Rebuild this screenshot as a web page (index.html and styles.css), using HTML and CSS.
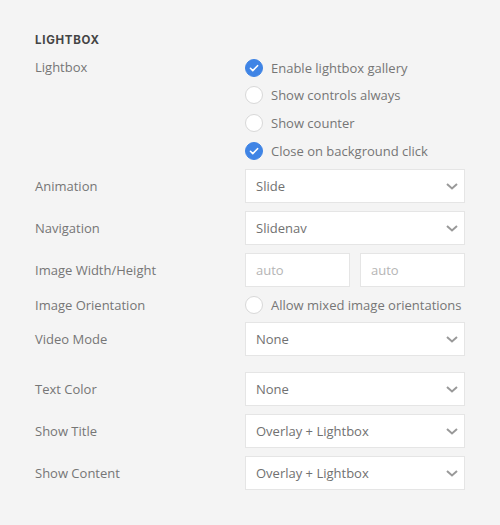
FILE: index.html
```html
<!DOCTYPE html>
<html>
<head>
<meta charset="utf-8">
<link rel="stylesheet" href="styles.css">
</head>
<body>
<div class="panel">
  <h3 class="heading">LIGHTBOX</h3>

  <div class="row row-top">
    <div class="label">Lightbox</div>
    <div class="control checks">
      <div class="check"><span class="box on"><svg viewBox="0 0 18 18"><path d="M5 9.3l2.6 2.6L13 6.4" /></svg></span>Enable lightbox gallery</div>
      <div class="check"><span class="box"></span>Show controls always</div>
      <div class="check"><span class="box"></span>Show counter</div>
      <div class="check"><span class="box on"><svg viewBox="0 0 18 18"><path d="M5 9.3l2.6 2.6L13 6.4" /></svg></span>Close on background click</div>
    </div>
  </div>

  <div class="row first-select">
    <div class="label">Animation</div>
    <div class="control"><div class="select">Slide<svg class="chev" viewBox="0 0 12 7"><path d="M1 1l5 4.5L11 1"/></svg></div></div>
  </div>

  <div class="row">
    <div class="label">Navigation</div>
    <div class="control"><div class="select">Slidenav<svg class="chev" viewBox="0 0 12 7"><path d="M1 1l5 4.5L11 1"/></svg></div></div>
  </div>

  <div class="row">
    <div class="label">Image Width/Height</div>
    <div class="control pair">
      <div class="input">auto</div>
      <div class="input">auto</div>
    </div>
  </div>

  <div class="row check-row">
    <div class="label">Image Orientation</div>
    <div class="control"><div class="check"><span class="box"></span>Allow mixed image orientations</div></div>
  </div>

  <div class="row">
    <div class="label">Video Mode</div>
    <div class="control"><div class="select">None<svg class="chev" viewBox="0 0 12 7"><path d="M1 1l5 4.5L11 1"/></svg></div></div>
  </div>

  <div class="row spaced">
    <div class="label">Text Color</div>
    <div class="control"><div class="select">None<svg class="chev" viewBox="0 0 12 7"><path d="M1 1l5 4.5L11 1"/></svg></div></div>
  </div>

  <div class="row">
    <div class="label">Show Title</div>
    <div class="control"><div class="select">Overlay + Lightbox<svg class="chev" viewBox="0 0 12 7"><path d="M1 1l5 4.5L11 1"/></svg></div></div>
  </div>

  <div class="row">
    <div class="label">Show Content</div>
    <div class="control"><div class="select">Overlay + Lightbox<svg class="chev" viewBox="0 0 12 7"><path d="M1 1l5 4.5L11 1"/></svg></div></div>
  </div>
</div>
</body>
</html>
```
FILE: styles.css
```css
html, body {
  margin: 0;
  padding: 0;
  background: #f4f4f4;
}
body {
  font-family: "Open Sans", "Noto Sans", sans-serif;
  font-size: 13px;
  color: #767676;
}
.panel {
  padding: 32px 35px 0 35px;
  width: 430px;
}
.heading {
  margin: 0;
  font-family: "Inter", "Lato", sans-serif;
  font-weight: 700;
  font-size: 11.5px;
  letter-spacing: 0.7px;
  color: #444;
  line-height: 16px;
}
.row {
  display: flex;
  align-items: center;
  margin-top: 8px;
}
.row-top {
  align-items: flex-start;
  margin-top: 6px;
}
.row-top .label {
  line-height: 27.6px;
}
.first-select {
  margin-top: 5px;
}
.check-row {
  margin-top: 4px;
  margin-bottom: -4px;
  height: 27px;
}
.spaced {
  margin-top: 16px;
}
.label {
  width: 210px;
  flex: none;
}
.control {
  width: 220px;
  flex: none;
}
.checks {
  display: flex;
  flex-direction: column;
}
.check {
  display: flex;
  align-items: center;
  height: 27.6px;
  white-space: nowrap;
}
.box {
  width: 16px;
  height: 16px;
  border-radius: 50%;
  border: 1px solid #d8d8d8;
  background: #fff;
  margin-right: 8px;
  flex: none;
  display: flex;
}
.box.on {
  background: #3f84e5;
  border-color: #3f84e5;
}
.box svg {
  width: 16px;
  height: 16px;
  fill: none;
  stroke: #fff;
  stroke-width: 1.8;
  stroke-linecap: round;
  stroke-linejoin: round;
}
.select, .input {
  box-sizing: border-box;
  height: 34px;
  background: #fff;
  border: 1px solid #e5e5e5;
  display: flex;
  align-items: center;
  padding: 0 10px;
  color: #717171;
}
.select {
  justify-content: space-between;
}
.chev {
  width: 12px;
  height: 7px;
  fill: none;
  stroke: #999;
  stroke-width: 2;
  margin-right: -4px;
}
.pair {
  display: flex;
  gap: 10px;
}
.input {
  flex: 1;
  color: #b5b5b5;
}
```
